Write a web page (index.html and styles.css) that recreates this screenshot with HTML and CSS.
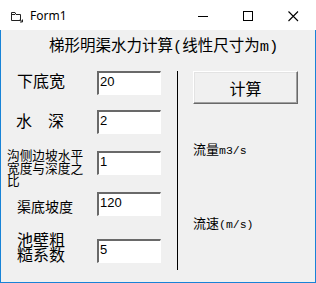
FILE: index.html
```html
<!DOCTYPE html>
<html lang="zh-CN">
<head>
<meta charset="utf-8">
<title>Form1</title>
<link rel="stylesheet" href="styles.css">
</head>
<body>
<div class="window">
  <div class="titlebar">
    <svg class="app-icon" width="14" height="13" viewBox="0 0 14 13">
      <path d="M1.5 2.5 V10.5 H10.5 V4.5 H6 L5 2.5 Z" fill="none" stroke="#222" stroke-width="1"/>
      <path d="M1.5 4.5 H5" stroke="#222" stroke-width="1"/>
      <path d="M10 9.5 L12.5 12 M12.5 9.5 V12 H10" fill="none" stroke="#222" stroke-width="1"/>
    </svg>
    <span class="title">Form1</span>
    <div class="controls">
      <div class="ctl"><svg width="11" height="11" viewBox="0 0 11 11"><path d="M0 5.5 H10" stroke="#000" stroke-width="1"/></svg></div>
      <div class="ctl"><svg width="11" height="11" viewBox="0 0 11 11"><rect x="0.5" y="0.5" width="9" height="9" fill="none" stroke="#000" stroke-width="1"/></svg></div>
      <div class="ctl"><svg width="11" height="11" viewBox="0 0 11 11"><path d="M0.5 0.5 L10 10 M10 0.5 L0.5 10" stroke="#000" stroke-width="1.1"/></svg></div>
    </div>
  </div>
  <div class="client">
    <div class="heading">梯形明渠水力计算(线性尺寸为m)</div>
    <div class="main">
      <div class="inputs">
        <div class="row r1"><div class="label l1">下底宽</div><div class="textbox">20</div></div>
        <div class="row r2"><div class="label l2">水　深</div><div class="textbox">2</div></div>
        <div class="row r3"><div class="label l3">沟侧边坡水平宽度与深度之比</div><div class="textbox">1</div></div>
        <div class="row r4"><div class="label l4">渠底坡度</div><div class="textbox">120</div></div>
        <div class="row r5"><div class="label l5">池壁粗糙系数</div><div class="textbox">5</div></div>
      </div>
      <div class="divider"></div>
      <div class="results">
        <button class="calc">计算</button>
        <div class="out out1"><span class="cjk">流量</span>m3/s</div>
        <div class="out out2"><span class="cjk">流速</span>(m/s)</div>
      </div>
    </div>
  </div>
</div>
</body>
</html>
```
FILE: styles.css
```css
html, body {
  margin: 0;
  padding: 0;
  background: #ffffff;
}
.window {
  width: 316px;
  height: 283px;
  display: flex;
  flex-direction: column;
  font-family: "Noto Sans CJK SC", sans-serif;
  color: #000;
}
.titlebar {
  height: 30px;
  flex: none;
  background: #ffffff;
  display: flex;
  align-items: center;
  position: relative;
}
.app-icon {
  margin-left: 10px;
  margin-top: 3px;
  flex: none;
}
.title {
  margin-left: 6px;
  margin-top: 1px;
  font-family: "Noto Sans", "Open Sans", sans-serif;
  font-size: 12px;
  color: #000;
}
.controls {
  margin-left: auto;
  display: flex;
  height: 30px;
}
.ctl {
  width: 45px;
  height: 30px;
  display: flex;
  align-items: center;
  justify-content: center;
  padding-top: 2px;
  box-sizing: border-box;
}
.client {
  flex: 1;
  background: #f0f0f0;
  border: 1px solid #1883d7;
  border-top: none;
  display: flex;
  flex-direction: column;
}
.heading {
  margin-top: 9px;
  padding-left: 48px;
  font-family: "Liberation Mono", "Noto Sans CJK SC", monospace;
  font-size: 15.5px;
  line-height: 16px;
  white-space: nowrap;
}
.main {
  margin-top: 9px;
  display: flex;
  align-items: flex-start;
}
.inputs {
  width: 176px;
  flex: none;
  display: flex;
  flex-direction: column;
}
.row {
  display: flex;
  align-items: center;
}
.r1 { height: 38px; }
.r2 { height: 40px; }
.r3 { height: 42px; }
.r4 { height: 40px; }
.r5 { height: 54px; }
.label {
  width: 96px;
  flex: none;
  box-sizing: border-box;
  font-size: 16px;
  line-height: 16px;
}
.l1 { padding-left: 16px; margin-bottom: 7px; }
.l2 { padding-left: 15px; margin-bottom: 5px; }
.l3 { padding-left: 6px; padding-right: 10px; font-size: 12.7px; line-height: 12.5px; margin-top: 10px; }
.l4 { padding-left: 16px; font-size: 14px; line-height: 14px; margin-top: 4px; }
.l5 { padding-left: 16px; padding-right: 30px; line-height: 15px; margin-bottom: 8px; }
.textbox {
  width: 64px;
  height: 24px;
  box-sizing: border-box;
  background: #ffffff;
  border-top: 2px solid #696969;
  border-left: 2px solid #696969;
  border-bottom: 1px solid #ffffff;
  border-right: 1px solid #ffffff;
  padding-left: 1px;
  font-family: "Liberation Sans", sans-serif;
  font-size: 13px;
  line-height: 18px;
}
.divider {
  width: 1px;
  height: 199px;
  margin-top: 7px;
  background: #000;
  flex: none;
}
.results {
  padding-left: 15px;
  margin-top: 7px;
  display: flex;
  flex-direction: column;
  align-items: flex-start;
}
.calc {
  width: 105px;
  height: 33px;
  margin: 0;
  padding: 0;
  background: #f0f0f0;
  border-top: 1px solid #ffffff;
  border-left: 1px solid #ffffff;
  border-bottom: 1px solid #696969;
  border-right: 1px solid #696969;
  box-shadow: inset -1px -1px 0 #a0a0a0, inset 1px 1px 0 #e3e3e3;
  font-family: "Noto Sans CJK SC", sans-serif;
  font-size: 16px;
  line-height: 16px;
  color: #000;
}
.out {
  font-family: "Liberation Mono", "Noto Sans CJK SC", monospace;
  font-size: 11.5px;
  line-height: 14px;
  white-space: nowrap;
}
.out .cjk {
  font-family: "Noto Sans CJK SC", sans-serif;
  font-size: 13px;
}
.out1 { margin-top: 38px; }
.out2 { margin-top: 58px; }
```
